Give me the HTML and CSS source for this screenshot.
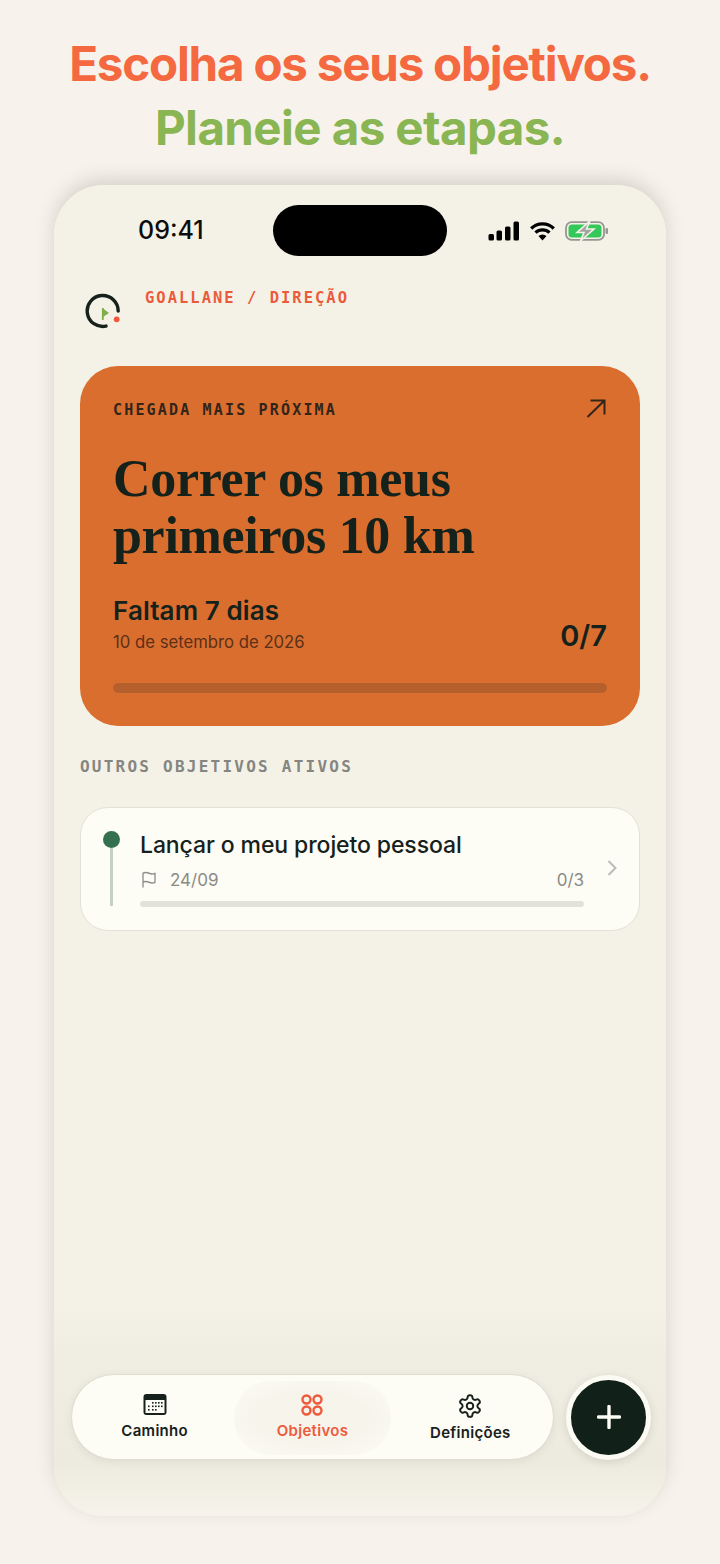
FILE: index.html
```html
<!DOCTYPE html>
<html lang="pt">
<head>
<meta charset="utf-8">
<title>Goallane</title>
<link rel="stylesheet" href="styles.css">
</head>
<body>
<main class="page">
  <header class="headline">
    <h1 class="headline-a">Escolha os seus objetivos.</h1>
    <h1 class="headline-b">Planeie as etapas.</h1>
  </header>
  <section class="phone">
    <div class="status">
      <span class="time">09:41</span>
      <span class="island"></span>
      <span class="status-icons">
        <svg width="32" height="20" viewBox="0 0 32 20"><rect x="0.500" y="13" width="5.500" height="6.500" rx="1.500"/><rect x="8.500" y="9.500" width="5.500" height="10" rx="1.500"/><rect x="17" y="5.500" width="5.500" height="14" rx="1.500"/><rect x="25.500" y="0.500" width="5.500" height="19" rx="1.500"/></svg>
        <svg width="25" height="20" viewBox="0 0 25 20"><path d="M1.200 7.500a16 16 0 0 1 22.600 0" fill="none" stroke="#000" stroke-width="3.200"/><path d="M5.500 11.700a10 10 0 0 1 14 0" fill="none" stroke="#000" stroke-width="3.200"/><path d="M12.500 19.500l-4-4.500a6 6 0 0 1 8 0z"/></svg>
        <svg width="44" height="22" viewBox="0 0 44 22"><rect x="1" y="2.200" width="38" height="17.600" rx="5.500" fill="none" stroke="#969694" stroke-width="1.800"/><rect x="3.500" y="4.500" width="33" height="13" rx="3.500" fill="#34c759"/><rect x="40.500" y="8" width="2.500" height="6" rx="1.200" fill="#969694"/><path d="M25 0.800L12 12.500h7l-3.500 8.500L29 9h-7.500z" fill="#a3a3a0" stroke="#f4f2e8" stroke-width="1.600"/></svg>
      </span>
    </div>
    <div class="brand">
      <svg class="logo" width="38" height="38" viewBox="0 0 38 38"><path d="M33.200 19A15.500 15.500 0 1 0 21 34.100" fill="none" stroke="#17211c" stroke-width="3.400" stroke-linecap="round"/><path d="M17.800 28V16" stroke="#7fae4a" stroke-width="1.800"/><path d="M18 16.500l6 4.500-6 4z" fill="#7fae4a"/><circle cx="31.700" cy="27.300" r="2.900" fill="#f1583a"/></svg>
      <span class="brand-text">GOALLANE / DIREÇÃO</span>
    </div>
    <article class="hero">
      <div class="hero-top">
        <span class="hero-label">CHEGADA MAIS PRÓXIMA</span>
        <svg width="22" height="22" viewBox="0 0 22 22"><path d="M2.500 20L19.500 3.500M5.500 3.500h14v14" fill="none" stroke="#33241a" stroke-width="2"/></svg>
      </div>
      <h2 class="hero-title">Correr os meus primeiros 10 km</h2>
      <div class="hero-meta">
        <div>
          <div class="hero-days">Faltam 7 dias</div>
          <div class="hero-date">10 de setembro de 2026</div>
        </div>
        <div class="hero-count">0/7</div>
      </div>
      <div class="hero-bar"></div>
    </article>
    <h3 class="section-label">OUTROS OBJETIVOS ATIVOS</h3>
    <article class="goal">
      <div class="goal-pin"><span class="pin-dot"></span><span class="pin-line"></span></div>
      <div class="goal-body">
        <div class="goal-title">Lançar o meu projeto pessoal</div>
        <div class="goal-meta">
          <svg width="18" height="18" viewBox="0 0 24 24"><path d="M4 15s1-1 4-1 5 2 8 2 4-1 4-1V3s-1 1-4 1-5-2-8-2-4 1-4 1zM4 22v-7" fill="none" stroke="#8f8f8a" stroke-width="1.800" stroke-linejoin="round"/></svg>
          <span class="goal-date">24/09</span>
          <span class="goal-count">0/3</span>
        </div>
        <div class="goal-bar"></div>
      </div>
      <svg class="goal-chevron" width="12" height="18" viewBox="0 0 12 18"><path d="M2.500 2l7 7-7 7" fill="none" stroke="#bcbcb6" stroke-width="2"/></svg>
    </article>
    <div class="spacer"></div>
    <div class="dock">
      <nav class="tabs">
        <div class="tab">
          <svg width="26" height="24" viewBox="0 0 26 24"><rect x="1.500" y="1" width="23" height="21" rx="3" fill="#17211c"/><rect x="3.500" y="7" width="19" height="13" fill="#fdfcf5"/><g fill="#17211c"><rect x="10" y="9" width="1.600" height="1.600"/><rect x="13" y="9" width="1.600" height="1.600"/><rect x="16" y="9" width="1.600" height="1.600"/><rect x="19" y="9" width="1.600" height="1.600"/><rect x="6" y="12.500" width="1.600" height="1.600"/><rect x="10" y="12.500" width="1.600" height="1.600"/><rect x="13" y="12.500" width="1.600" height="1.600"/><rect x="16" y="12.500" width="1.600" height="1.600"/><rect x="19" y="12.500" width="1.600" height="1.600"/><rect x="6" y="16" width="1.600" height="1.600"/><rect x="10" y="16" width="1.600" height="1.600"/><rect x="13" y="16" width="1.600" height="1.600"/></g></svg>
          <span>Caminho</span>
        </div>
        <div class="tab tab-active">
          <svg width="26" height="24" viewBox="0 0 26 24"><g fill="none" stroke="#ee5a3c" stroke-width="2.400"><circle cx="7.500" cy="6.500" r="4"/><circle cx="18.500" cy="6.500" r="4"/><circle cx="7.500" cy="17.500" r="4"/><circle cx="18.500" cy="17.500" r="4"/></g></svg>
          <span>Objetivos</span>
        </div>
        <div class="tab">
          <svg width="26" height="26" viewBox="0 0 24 24" fill="none" stroke="#17211c" stroke-width="1.800" stroke-linejoin="round"><path d="M12.220 2h-.44a2 2 0 0 0-2 2v.18a2 2 0 0 1-1 1.730l-.43.250a2 2 0 0 1-2 0l-.15-.080a2 2 0 0 0-2.730.730l-.22.380a2 2 0 0 0 .73 2.730l.15.100a2 2 0 0 1 1 1.720v.510a2 2 0 0 1-1 1.740l-.15.090a2 2 0 0 0-.73 2.730l.22.380a2 2 0 0 0 2.730.730l.15-.080a2 2 0 0 1 2 0l.43.250a2 2 0 0 1 1 1.730V20a2 2 0 0 0 2 2h.44a2 2 0 0 0 2-2v-.18a2 2 0 0 1 1-1.730l.43-.250a2 2 0 0 1 2 0l.15.080a2 2 0 0 0 2.730-.730l.22-.390a2 2 0 0 0-.73-2.730l-.15-.080a2 2 0 0 1-1-1.740v-.5a2 2 0 0 1 1-1.740l.15-.090a2 2 0 0 0 .73-2.730l-.22-.380a2 2 0 0 0-2.730-.730l-.15.080a2 2 0 0 1-2 0l-.43-.250a2 2 0 0 1-1-1.730V4a2 2 0 0 0-2-2z"/><circle cx="12" cy="12" r="3"/></svg>
          <span>Definições</span>
        </div>
      </nav>
      <button class="fab" aria-label="Adicionar"><svg width="24" height="24" viewBox="0 0 24 24"><path d="M12 1.500v21M1.500 12h21" stroke="#fdfcf5" stroke-width="3.400" stroke-linecap="round"/></svg></button>
    </div>
  </section>
</main>
</body>
</html>
```
FILE: styles.css
```css
* { box-sizing: border-box; }
html, body { margin: 0; padding: 0; }
body { background: #f7f3ec; font-family: Inter, "Noto Sans", sans-serif; color: #17211c; }
.page { width: 720px; height: 1564px; overflow: hidden; display: flex; flex-direction: column; align-items: center; }
.headline { height: 185px; padding-top: 32px; text-align: center; }
.headline h1 { margin: 0; font-size: 47.500px; line-height: 64px; font-weight: 700; }
.headline-a { color: #f4693f; letter-spacing: -1.200px; }
.headline-b { color: #8ab553; letter-spacing: -.6px; }
.phone { width: 612px; height: 1331px; border-radius: 50px; padding: 0 26px; display: flex; flex-direction: column;
  background: linear-gradient(#f4f2e7 0, #f4f2e7 84%, #f0eee3 88%, #edebdf 96%, #f6f3ea 100%);
  box-shadow: 0 -6px 18px rgba(60,55,40,.17); }
.status { height: 90px; padding: 20px 0 0 58px; display: flex; align-items: flex-start; }
.time { font-size: 25px; font-weight: 500; line-height: 51px; color: #0c0c0c; }
.island { width: 174px; height: 51px; border-radius: 26px; background: #000; margin-left: 69px; }
.status-icons { display: flex; align-items: center; gap: 10px; margin-left: 41px; height: 51px; }
.status-icons svg { display: block; }
.brand { height: 91px; display: flex; align-items: flex-start; padding-left: 5px; }
.logo { margin-top: 17px; }
.brand-text { margin: 14px 0 0 22px; font-family: "DejaVu Sans Mono", monospace; font-weight: 700; font-size: 15.500px; line-height: 18px; letter-spacing: 2px; color: #ec5a3c; }
.hero { height: 360px; border-radius: 38px; background: #da6e2e; padding: 32px 33px 33px; flex: none; display: flex; flex-direction: column; }
.hero-top { display: flex; justify-content: space-between; align-items: flex-start; height: 23px; }
.hero-label { font-family: "DejaVu Sans Mono", monospace; font-weight: 700; font-size: 15px; line-height: 24px; letter-spacing: 2.170px; color: #33241a; }
.hero-top svg { margin-top: -1px; }
.hero-title { margin: 29px 0 0; width: 420px; font-family: "Liberation Serif", serif; font-weight: 700; font-size: 52px; line-height: 57px; letter-spacing: -.3px; color: #15211b; }
.hero-meta { display: flex; justify-content: space-between; align-items: flex-end; margin-top: 30px; }
.hero-days { font-size: 26px; font-weight: 600; line-height: 34px; letter-spacing: .1px; color: #15211b; }
.hero-date { font-size: 16.700px; line-height: 29px; color: #5a3018; }
.hero-count { font-size: 29px; font-weight: 600; line-height: 40px; padding-bottom: 1px; color: #15211b; }
.hero-bar { height: 10px; border-radius: 5px; background: #b5602c; margin-top: 26px; }
.section-label { margin: 31px 0 0; font-family: "DejaVu Sans Mono", monospace; font-weight: 700; font-size: 16px; line-height: 20px; letter-spacing: 2.240px; color: #858581; }
.goal { margin-top: 30px; height: 124px; flex: none; border-radius: 28px; border: 1.500px solid #e3e1d6; background: #fdfcf5; display: flex; padding: 23px 21px 0 22px; }
.goal-pin { width: 17px; display: flex; flex-direction: column; align-items: center; }
.pin-dot { width: 17px; height: 17px; border-radius: 50%; background: #34704f; flex: none; }
.pin-line { width: 3px; height: 58px; background: #c5d0c0; }
.goal-body { width: 445px; margin: -1px 0 0 20px; }
.goal-title { font-size: 23px; font-weight: 500; line-height: 30px; letter-spacing: -.1px; color: #15211b; }
.goal-meta { display: flex; align-items: center; height: 24px; margin-top: 8px; font-size: 17px; color: #8b8b86; }
.goal-date { margin-left: 12px; }
.goal-count { margin-left: auto; }
.goal-bar { height: 6px; border-radius: 3px; background: #e3e2da; margin-top: 9px; }
.goal-chevron { margin: 28px 0 0 22px; }
.spacer { flex: 1; }
.dock { display: flex; align-items: center; margin: 0 -10px 55px -9px; height: 88px; }
.tabs { flex: none; width: 483px; height: 86px; border-radius: 43px; background: #fdfcf5; border: 1.500px solid #dfddd1; box-shadow: 0 2px 8px rgba(60,55,40,.08); display: flex; padding: 6px 3.750px 0; }
.tab { flex: 1; height: 74px; display: flex; flex-direction: column; align-items: center; padding-top: 12px; font-size: 15px; font-weight: 600; gap: 5px; letter-spacing: .3px; border-radius: 37px; color: #17211c; }
.tab svg { display: block; }
.tab span { line-height: 18px; }
.tab-active { background: radial-gradient(ellipse at center, #f6f4eb 50%, #fdfcf5 100%); color: #ee5a3c; }
.fab { margin-left: 12px; flex: none; width: 85px; height: 85px; border-radius: 50%; background: #12201a; border: 5px solid #fbfaf3; box-shadow: 0 2px 8px rgba(60,55,40,.15); display: flex; align-items: center; justify-content: center; padding: 0; }
.fab svg { display: block; }
```
